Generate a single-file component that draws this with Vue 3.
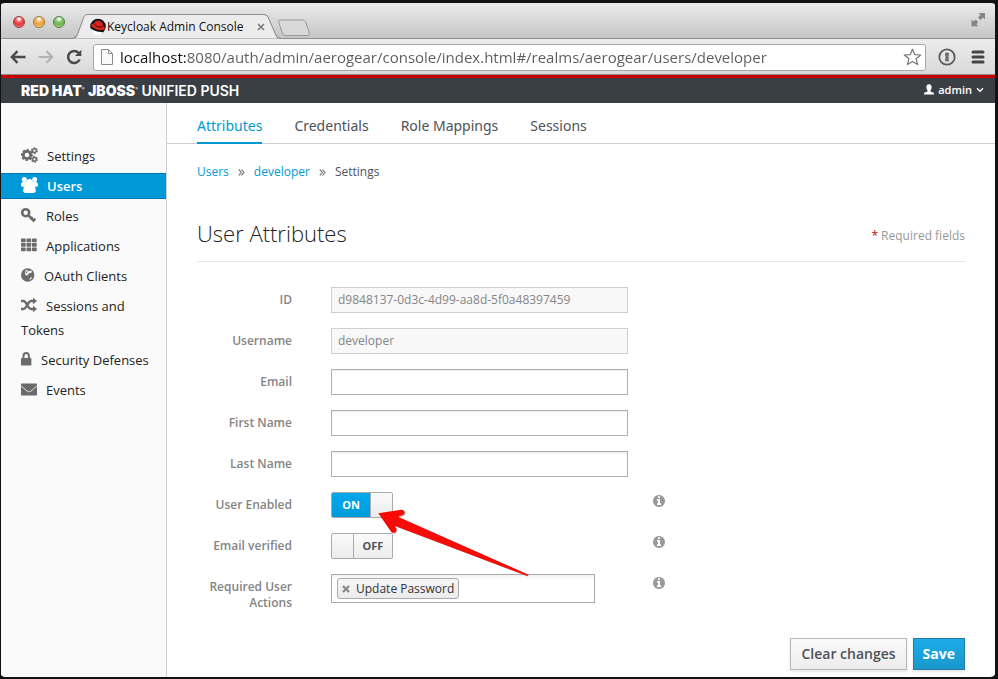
<script setup>
import { ref } from 'vue'

const address = ref('localhost:8080/auth/admin/aerogear/console/index.html#/realms/aerogear/users/developer')

const menu = [
  { name: 'Settings', icon: 'cogs', width: 17 },
  { name: 'Users', icon: 'group', width: 17, active: true },
  { name: 'Roles', icon: 'key', width: 16 },
  { name: 'Applications', icon: 'grid', width: 16 },
  { name: 'OAuth Clients', icon: 'globe', width: 14 },
  { name: 'Sessions and Tokens', icon: 'random', width: 16 },
  { name: 'Security Defenses', icon: 'lock', width: 11 },
  { name: 'Events', icon: 'mail', width: 16 }
]

const tabs = ['Attributes', 'Credentials', 'Role Mappings', 'Sessions']

const fields = ref([
  { id: 'uid', label: 'ID', value: 'd9848137-0d3c-4d99-aa8d-5f0a48397459', readonly: true },
  { id: 'username', label: 'Username', value: 'developer', readonly: true },
  { id: 'email', label: 'Email', value: '' },
  { id: 'first', label: 'First Name', value: '' },
  { id: 'last', label: 'Last Name', value: '' }
])

const switches = ref([
  { id: 'enabled', label: 'User Enabled', on: true, arrow: true },
  { id: 'verified', label: 'Email verified', on: false }
])

const actions = ref(['Update Password'])
const infoPath = 'M1152 1376v-160q0-14-9-23t-23-9h-96v-512q0-14-9-23t-23-9h-320q-14 0-23 9t-9 23v160q0 14 9 23t23 9h96v320h-96q-14 0-23 9t-9 23v160q0 14 9 23t23 9h448q14 0 23-9t9-23zm-128-896v-160q0-14-9-23t-23-9h-192q-14 0-23 9t-9 23v160q0 14 9 23t23 9h192q14 0 23-9t9-23zm640 416q0 209-103 385.5t-279.5 279.5-385.5 103-385.5-103-279.5-279.5-103-385.5 103-385.5 279.5-279.5 385.5-103 385.5 103 279.5 279.5 103 385.5z'
</script>

<template>
  <div class="window">
    <div class="tabstrip">
      <div class="lights">
        <button class="light red" aria-label="Close"></button>
        <button class="light amber" aria-label="Minimise"></button>
        <button class="light green" aria-label="Zoom"></button>
      </div>
      <div class="browser-tab">
        <svg class="tab-shape" viewBox="0 0 208 25" preserveAspectRatio="none" aria-hidden="true">
          <path d="M0 24.500C4 24.500 5 22 6 19L11 5C12 1.500 13 .5 16 .5H190C193 .5 195 1.500 196 5L202 19C203 22 204 24.500 208 24.500" fill="#ececec" stroke="#909090" />
        </svg>
        <svg class="favicon" width="16" height="17" viewBox="0 0 16 17" aria-hidden="true">
          <circle cx="8" cy="8.500" r="7.800" fill="#111" />
          <path d="M.5 10C4 13.500 9 14 13 14C11.500 16 10 17 8 17C4.500 17 1.500 14.500 .5 10Z" fill="#fff" />
          <path d="M1 7.500C1.500 5.500 3 5.500 4.500 5.500C5 3 6 2.500 8 3C11 2.500 12.500 4 13 7C13.500 9 15 9 15 11C13 13 7 12 4.500 10.500C3 9.500 2 9 1 7.500Z" fill="#d8231f" />
          <path d="M4.500 6C5 8.500 9.500 9.500 12.500 8.700" fill="none" stroke="#3a0907" />
        </svg>
        <span class="tab-title">Keycloak Admin Console</span>
        <button class="tab-close" aria-label="Close tab">
          <svg width="8" height="8" viewBox="0 0 8 8"><path d="M1 1L7 7M7 1L1 7" stroke="#7b7b7b" stroke-width="1.600" /></svg>
        </button>
      </div>
      <button class="new-tab" aria-label="New tab">
        <svg width="34" height="18" viewBox="0 0 34 18">
          <path d="M3 1H25C27 1 28 1.500 29 4L32 13C33 15.500 32 16.500 30 16.500H9C6.500 16.500 6 15.500 5 13L2 4C1.300 2 1.500 1 3 1Z" fill="#d9d9d9" stroke="#999" />
        </svg>
      </button>
      <button class="fullscreen" aria-label="Full screen">
        <svg width="15" height="15" viewBox="0 0 15 15" fill="#858585">
          <path d="M7.500 1H14V7.500L12 5.600L9.600 8L7 5.400L9.400 3ZM.5 7.500L2.600 9.500L4.700 7.500L7.300 10.200L5.300 12.200L7.400 14.300H.5Z" />
        </svg>
      </button>
    </div>

    <div class="toolbar">
      <button class="nav" aria-label="Back">
        <svg width="16" height="14" viewBox="0 0 16 14" fill="none" stroke="#4a4a4a" stroke-width="2.400"><path d="M15.500 7H2.500M7.500 1.200L1.800 7L7.500 12.800" /></svg>
      </button>
      <button class="nav" aria-label="Forward">
        <svg width="16" height="14" viewBox="0 0 16 14" fill="none" stroke="#b3b3b3" stroke-width="2.200"><path d="M.5 7H13.500M8.500 1.200L14.200 7L8.500 12.800" /></svg>
      </button>
      <button class="nav" aria-label="Reload">
        <svg width="16" height="16" viewBox="0 0 16 16"><path d="M12.600 4A6 6 0 1 0 13.600 10.500" fill="none" stroke="#4a4a4a" stroke-width="2.500" /><path d="M15.300 .8V7H9Z" fill="#4a4a4a" /></svg>
      </button>
      <div class="address">
        <svg width="12" height="16" viewBox="0 0 12 16" fill="#fafafa" stroke="#8b8b8b" aria-hidden="true"><path d="M.5 .5H7.500L11.500 4.500V15.500H.5ZM7.500 .5V4.500H11.500" /></svg>
        <input v-model="address" type="text" aria-label="Address" spellcheck="false" />
        <button class="star" aria-label="Bookmark">
          <svg width="19" height="18" viewBox="0 0 19 18"><path d="M9.500 1.200L11.700 6.600L17.700 7L13.100 10.800L14.600 16.600L9.500 13.400L4.400 16.600L5.900 10.800L1.300 7L7.300 6.600Z" fill="#fff" stroke="#777" stroke-width="1.200" stroke-linejoin="round" /></svg>
        </button>
      </div>
      <button class="nav" aria-label="Password manager">
        <svg width="18" height="18" viewBox="0 0 18 18"><circle cx="9" cy="9" r="7.700" fill="none" stroke="#5a5a5a" stroke-width="1.800" /><path d="M7.300 4.800H10.700V8L10 9L10.700 10V13.200H7.300V10L8 9L7.300 8Z" fill="#5a5a5a" /><path d="M9 6.500V8.500M9 10V12" stroke="#aaa" stroke-width=".8" /></svg>
      </button>
      <button class="nav menu-button" aria-label="Menu">
        <svg width="14" height="14" viewBox="0 0 14 14" stroke="#444" stroke-width="3" stroke-linecap="round"><path d="M2 2H12M2 7H12M2 12H12" /></svg>
      </button>
    </div>

    <header class="masthead">
      <div class="brand"><b>RED HAT</b><i>®</i> <b>JBOSS</b><i>®</i> <span>UNIFIED PUSH</span></div>
      <button class="account">
        <svg width="10" height="11" viewBox="0 0 10 11" fill="#fff"><path d="M5 .3C7 .3 7.800 1.700 7.600 3.500C7.500 5 7 5.800 6.400 6.400V7.400L9.200 8.500C9.800 8.800 10 9.500 10 10.500H0C0 9.500 .2 8.800 .8 8.500L3.600 7.400V6.400C3 5.800 2.500 5 2.400 3.500C2.200 1.700 3 .3 5 .3Z" /></svg>
        <span>admin</span>
        <svg width="8" height="6" viewBox="0 0 8 6"><path d="M1 1.200L4 4.200L7 1.200" fill="none" stroke="#fff" stroke-width="1.400" /></svg>
      </button>
    </header>

    <div class="body">
      <nav class="sidebar">
        <a v-for="item in menu" :key="item.name" href="#" :class="{ active: item.active }">
          <svg class="menu-icon" :width="item.width" height="16" :viewBox="`0 0 ${item.width} 16`" aria-hidden="true">
            <g v-if="item.icon === 'cogs'" fill="none" stroke="currentColor">
              <circle cx="6" cy="8" r="3.700" stroke-width="2.800" />
              <circle cx="6" cy="8" r="5.200" stroke-width="1.800" stroke-dasharray="2.300 1.784" stroke-dashoffset="1" />
              <circle cx="13.400" cy="3.700" r="1.900" stroke-width="1.500" />
              <circle cx="13.400" cy="3.700" r="2.900" stroke-width="1.200" stroke-dasharray="1.600 1.437" />
              <circle cx="13.400" cy="12.300" r="1.900" stroke-width="1.500" />
              <circle cx="13.400" cy="12.300" r="2.900" stroke-width="1.200" stroke-dasharray="1.600 1.437" />
            </g>
            <g v-else-if="item.icon === 'group'" fill="currentColor">
              <circle cx="3.300" cy="2.600" r="2.500" /><circle cx="13.700" cy="2.600" r="2.500" /><circle cx="8.500" cy="5.600" r="3.500" />
              <path d="M0 8.500C0 6 .8 5 2 5H15C16.200 5 17 6 17 8.500C17 9.400 16.300 9.700 14 9.700C14.500 11 14.800 12.500 14.800 13.500C14.800 15.300 13.800 16 12.300 16H4.700C3.200 16 2.200 15.300 2.200 13.500C2.200 12.500 2.500 11 3 9.700C.7 9.700 0 9.400 0 8.500Z" />
            </g>
            <g v-else-if="item.icon === 'key'" fill="none" stroke="currentColor">
              <circle cx="4.700" cy="5.700" r="3.500" stroke-width="2.600" />
              <path d="M7.200 8.200L13.300 14.300" stroke-width="2.600" /><path d="M9.300 12.300L11.600 10M12 14.200L14.300 11.500" stroke-width="2.200" />
            </g>
            <g v-else-if="item.icon === 'grid'" fill="currentColor">
              <template v-for="r in 3" :key="r">
                <rect v-for="c in 3" :key="c" :x="(c - 1) * 5.5" :y="(r - 1) * 4.5 + 1.5" width="4.700" height="3.700" rx=".6" />
              </template>
            </g>
            <g v-else-if="item.icon === 'globe'">
              <circle cx="6.700" cy="8" r="6.700" fill="currentColor" />
              <path d="M4.500 3.500L6.500 2.800L6.800 4.300L8.500 4L10 3.300L11 5L9.500 6.300L8.300 6L7 7.800L5.700 8.800L4.300 7.600L4 6.200ZM8.500 11.500L11 9.800L10.300 12L8.600 12.800Z" fill="#fafafa" />
              <path d="M5 4.500L6.500 4.200L6 6L5 6.500Z" fill="currentColor" />
            </g>
            <g v-else-if="item.icon === 'random'">
              <path d="M0 4H2.500C5.500 4 7 12 10 12H12.500M0 12H2.500C5.500 12 7 4 10 4H12.500" fill="none" stroke="currentColor" stroke-width="2.500" />
              <path d="M12 .7L16 4L12 7.300ZM12 8.700L16 12L12 15.300Z" fill="currentColor" />
            </g>
            <g v-else-if="item.icon === 'lock'">
              <path d="M2.500 8V5.200A2.700 3.100 0 0 1 7.900 5.200V8" fill="none" stroke="currentColor" stroke-width="2" />
              <rect x="0" y="7" width="10.400" height="7.500" rx=".8" fill="currentColor" />
            </g>
            <g v-else fill="currentColor">
              <path d="M1 2.500H15C15.600 2.500 16 3 16 3.500V4.500L9.500 10C8.600 10.700 7.400 10.700 6.500 10L0 4.500V3.500C0 3 .4 2.500 1 2.500ZM0 5.300L6 10.500C7.200 11.500 8.800 11.500 10 10.500L16 5.300V13.500C16 14.100 15.600 14.500 15 14.500H1C.4 14.500 0 14.100 0 13.500Z" />
            </g>
          </svg>{{ item.name }}
        </a>
      </nav>

      <main class="content">
        <nav class="tabs">
          <a v-for="(tab, i) in tabs" :key="tab" href="#" :class="{ active: i === 0 }">{{ tab }}</a>
        </nav>
        <div class="page">
          <nav class="crumbs" aria-label="Breadcrumb">
            <a href="#">Users</a>
            <svg width="7" height="7" viewBox="0 0 7 7"><path d="M.8 .5L3.300 3.500L.8 6.500M3.500 .5L6 3.500L3.500 6.500" fill="none" stroke="#888" stroke-width="1.200" /></svg>
            <a href="#">developer</a>
            <svg width="7" height="7" viewBox="0 0 7 7"><path d="M.8 .5L3.300 3.500L.8 6.500M3.500 .5L6 3.500L3.500 6.500" fill="none" stroke="#888" stroke-width="1.200" /></svg>
            <span>Settings</span>
          </nav>
          <div class="heading">
            <h1>User Attributes</h1>
            <p><span>*</span> Required fields</p>
          </div>
          <form @submit.prevent>
            <div v-for="f in fields" :key="f.id" class="row">
              <label class="caption" :for="f.id">{{ f.label }}</label>
              <div class="control">
                <input :id="f.id" v-model="f.value" class="text" type="text" :readonly="f.readonly" spellcheck="false" />
              </div>
            </div>

            <div v-for="s in switches" :key="s.id" class="row">
              <label class="caption" :for="s.id">{{ s.label }}</label>
              <div class="control">
                <div class="switch" :class="{ on: s.on }">
                  <input :id="s.id" v-model="s.on" type="checkbox" />
                  <span class="state">{{ s.on ? 'ON' : 'OFF' }}</span>
                  <span class="knob"></span>
                </div>
                <svg v-if="s.arrow" class="arrow" width="160" height="72" viewBox="0 0 160 72" aria-hidden="true">
                  <path d="M3 5.300L25 2C29 1.500 30 5.500 26.500 7L22 8.800L152 66.500L151 67.500L18.500 17.500L20 20.500C21 24 17 26.500 14.500 23.500Z" fill="#000" opacity=".3" />
                  <path d="M1.300 4.300L24 .8C28 .3 29 4.800 25.500 6L21 7.700L151 65.500L150.500 67L17.500 16.800L19.300 19.500C20.500 23 16.500 25.500 14 22.500Z" fill="#f60b06" />
                </svg>
              </div>
              <svg class="info" width="14" height="14" viewBox="0 0 1792 1792" role="img" aria-label="Info"><path :d="infoPath" fill="#999" /></svg>
            </div>

            <div class="row">
              <label class="caption" for="actions">Required User Actions</label>
              <div class="control">
                <div class="multi">
                  <span v-for="a in actions" :key="a" class="chip">
                    <button type="button" :aria-label="`Remove ${a}`">
                      <svg width="8" height="8" viewBox="0 0 8 8"><path d="M1 1L7 7M7 1L1 7" stroke="#888" stroke-width="2.200" /></svg>
                    </button>{{ a }}
                  </span>
                  <input id="actions" type="text" />
                </div>
              </div>
              <svg class="info" width="14" height="14" viewBox="0 0 1792 1792" role="img" aria-label="Info"><path :d="infoPath" fill="#999" /></svg>
            </div>

            <div class="buttons">
              <button type="reset" class="btn">Clear changes</button>
              <button type="submit" class="btn primary">Save</button>
            </div>
          </form>
        </div>
      </main>
    </div>
  </div>
</template>

<style>
body {
  background: #121212;
}
</style>

<style scoped>
* {
  box-sizing: border-box;
}
.window {
  margin: 0 3px 0 1px;
  border: solid #121212;
  border-width: 3px 0 2px;
  border-radius: 5px;
  min-height: 100vh;
  display: flex;
  flex-direction: column;
  background: #fff;
  font-family: 'Open Sans', 'Noto Sans', sans-serif;
  font-size: 12px;
  color: #4d5258;
  overflow: hidden;
}
button {
  font: inherit;
  padding: 0;
  border: 0;
  background: none;
  color: inherit;
}
svg {
  display: block;
}
a {
  text-decoration: none;
  color: #0099d3;
}

/* Browser chrome */
.tabstrip {
  height: 36px;
  flex: none;
  display: flex;
  align-items: flex-end;
  background: linear-gradient(#ebebeb, #c4c4c4);
  box-shadow: inset 0 -1px #909090;
  border-radius: 5px 5px 0 0;
}
.lights {
  display: flex;
  gap: 8px;
  padding: 0 7px 11px 12px;
}
.light {
  width: 12px;
  height: 12px;
  border-radius: 50%;
  border: 1px solid;
}
.red {
  background: radial-gradient(circle at 50% 20%, #fff 5%, #f0605c 35%, #e0383c 60%, #ff9b9b);
  border-color: #9c3b3b;
}
.amber {
  background: radial-gradient(circle at 50% 20%, #fff 5%, #f4b457 35%, #eda33c 60%, #ffe88c);
  border-color: #a5752f;
}
.green {
  background: radial-gradient(circle at 50% 20%, #fff 5%, #85c470 35%, #6cb553 60%, #c7f3a5);
  border-color: #507f41;
}
.browser-tab {
  position: relative;
  width: 209px;
  height: 25px;
  display: flex;
  align-items: center;
  padding: 0 16px 0 18px;
  color: #111;
}
.tab-shape {
  position: absolute;
  inset: 0;
  width: 100%;
  height: 100%;
}
.favicon,
.tab-title,
.tab-close {
  position: relative;
}
.tab-title {
  flex: 1;
  padding-left: 1px;
  line-height: 16px;
  white-space: nowrap;
}
.new-tab {
  margin: 0 0 2px -4px;
}
.fullscreen {
  margin: 0 9px 12px auto;
}
.toolbar {
  height: 36px;
  flex: none;
  display: flex;
  align-items: center;
  gap: 12px;
  padding: 0 10px 0 9px;
  background: linear-gradient(#ececec, #d9d9d9);
  box-shadow: inset 0 -1px #8c8c8c;
}
.address {
  flex: 1;
  min-width: 0;
  height: 27px;
  display: flex;
  align-items: center;
  gap: 7px;
  margin-left: -1px;
  padding: 0 3px 0 7px;
  background: #fff;
  border: 1px solid #a6a6a6;
  border-radius: 3px;
}
.address input {
  flex: 1;
  min-width: 0;
  padding: 0 0 1px;
  border: 0;
  outline: 0;
  font-family: 'Open Sans', sans-serif;
  font-size: 15px;
  line-height: 22px;
  color: transparent;
  background: linear-gradient(90deg, #111 66px, #5c5c5c 66px);
  -webkit-background-clip: text;
  background-clip: text;
}
.nav {
  flex: none;
}
.menu-button {
  margin-left: 3px;
}

/* Masthead */
.masthead {
  display: flex;
  align-items: center;
  justify-content: space-between;
  height: 28px;
  flex: none;
  padding: 0 11px 2px 20px;
  border-top: 3px solid #cc0000;
  background: #393f45;
  color: #fff;
}
.brand {
  font-family: Inter, sans-serif;
  font-size: 14px;
  font-weight: 600;
  line-height: 16px;
}
.brand b {
  font-weight: 900;
}
.brand i {
  font-size: 4px;
  vertical-align: 6px;
}
.account {
  display: flex;
  align-items: center;
  gap: 4px;
  line-height: 16px;
  font-size: 11px;
  font-weight: 600;
}

/* Sidebar */
.body {
  flex: 1;
  display: flex;
}
.sidebar {
  width: 166px;
  flex: none;
  padding-top: 40px;
  background: #fafafa;
  border-right: 1px solid #cfcfcf;
}
.sidebar a {
  display: block;
  margin-bottom: 4px;
  padding: 0 10px 0 20px;
  border: solid transparent;
  border-width: 1px 0;
  font-size: 13px;
  line-height: 24px;
  color: #222;
}
.sidebar a.active {
  background: #0099d7;
  border-color: #0079b5;
  color: #fff;
  font-weight: 600;
}
.menu-icon {
  display: inline-block;
  vertical-align: -2px;
  margin-right: 9px;
  color: #6b6b6b;
}
.active .menu-icon {
  color: #fff;
}

/* Content */
.content {
  flex: 1;
  min-width: 0;
}
.tabs {
  display: flex;
  gap: 32px;
  height: 41px;
  padding: 0 30px;
  border-bottom: 1px solid #cfcfcf;
}
.tabs a {
  height: 41px;
  line-height: 46px;
  font-family: 'Noto Sans', sans-serif;
  font-size: 14px;
  color: #4d5258;
}
.tabs a.active {
  color: #0099d3;
  border-bottom: 2px solid #0099d3;
}
.page {
  padding: 19px 30px 7px;
}
.crumbs {
  display: flex;
  align-items: center;
  gap: 9px;
  line-height: 18px;
}
.heading {
  display: flex;
  align-items: center;
  justify-content: space-between;
  margin-top: 35px;
  padding-bottom: 11px;
  border-bottom: 1px solid #e6e6e6;
}
h1 {
  margin: 0;
  font-size: 22px;
  line-height: 34px;
  font-weight: 300;
  color: #222;
}
.heading p {
  margin: 0;
  padding-top: 4px;
  color: #999;
}
.heading p span {
  color: #c00;
}
form {
  padding-top: 25px;
}
.row {
  display: flex;
  align-items: flex-start;
  margin-bottom: 15px;
}
.caption {
  width: 95px;
  margin-right: 39px;
  padding-top: 5px;
  line-height: 16px;
  font-weight: 600;
  text-align: right;
  color: #858585;
}
.control {
  position: relative;
  width: 297px;
  margin-right: 24px;
}
.text {
  display: block;
  width: 100%;
  height: 26px;
  padding: 0 6px 2px;
  border: 1px solid #b0b0b0;
  background: #fff;
  box-shadow: inset 0 1px 1px rgba(0, 0, 0, 0.08);
  font: inherit;
  color: #333;
}
.text:read-only {
  border-color: #cfcfcf;
  background: #f8f8f8;
  box-shadow: none;
  color: #858585;
}
.switch {
  position: relative;
  display: flex;
  flex-direction: row-reverse;
  width: 62px;
  height: 26px;
  border: 1px solid #aaa;
  border-radius: 2px;
  background: linear-gradient(#fafafa, #ececec);
  overflow: hidden;
}
.switch.on {
  flex-direction: row;
}
.switch input {
  position: absolute;
  inset: 0;
  width: 100%;
  height: 100%;
  margin: 0;
  opacity: 0;
}
.state {
  flex: 1;
  line-height: 24px;
  font-size: 11px;
  font-weight: 700;
  text-align: center;
}
.on .state {
  color: #fff;
  background: linear-gradient(#00a9ec, #009bdb);
}
.knob {
  width: 22px;
  border-right: 1px solid #aaa;
}
.on .knob {
  border-right: 0;
  border-left: 1px solid #aaa;
}
.arrow {
  position: absolute;
  left: 46px;
  top: 17px;
  z-index: 1;
  pointer-events: none;
}
.info {
  margin-top: 2px;
}
.multi {
  display: flex;
  align-items: center;
  width: 264px;
  height: 29px;
  padding: 0 5px;
  border: 1px solid #aaa;
  background: linear-gradient(#f2f2f2, #fff 5px);
}
.multi input {
  flex: 1;
  min-width: 0;
  border: 0;
  outline: 0;
  background: none;
}
.chip {
  display: flex;
  align-items: center;
  gap: 6px;
  height: 21px;
  padding: 0 4px;
  border: 1px solid #aaa;
  border-radius: 3px;
  background: linear-gradient(#f6f6f6, #ebebeb);
  color: #333;
  white-space: nowrap;
}
.buttons {
  display: flex;
  justify-content: flex-end;
  gap: 6px;
  padding-top: 12px;
}
.btn {
  height: 32px;
  padding: 0 10px 2px;
  border: 1px solid #b7b7b7;
  background: linear-gradient(#fafafa, #ededed);
  box-shadow: 0 2px 3px rgba(0, 0, 0, 0.1);
  font-size: 14px;
  font-weight: 600;
}
.primary {
  padding: 0 9px 2px;
  border-color: #267da1;
  background: linear-gradient(#1cace8, #1998cc);
  color: #fff;
  font-weight: 700;
}
</style>
